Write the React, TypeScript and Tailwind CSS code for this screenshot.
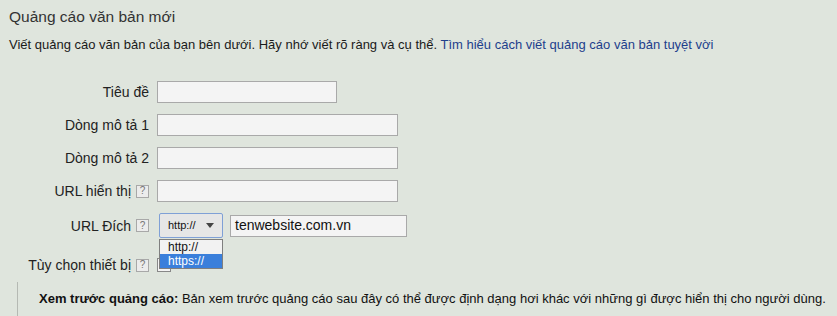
import React from "react";

function Help() {
  return (
    <span className="inline-flex h-[13px] w-[13px] items-center justify-center border border-[#a8a8a8] bg-[#ececec] text-[10px] leading-none text-[#777]">
      ?
    </span>
  );
}

function Label({ text, help, extra = "" }: { text: string; help?: boolean; extra?: string }) {
  return (
    <div className={`flex items-center justify-end gap-[5px] pr-[8px] text-[14px] leading-[16px] text-[#222] ${extra}`}>
      <span>{text}</span>
      {help && <Help />}
    </div>
  );
}

function Field({ w }: { w: string }) {
  return <div className={`h-[22px] ${w} border border-[#a9a9a9] bg-[#f4f4f4]`} />;
}

export default function App() {
  return (
    <div
      className="relative h-[316px] w-[837px] overflow-hidden bg-[#dfe5dd] text-[#222]"
      style={{ fontFamily: '"Liberation Sans", Arial, sans-serif' }}
    >
      <div className="px-[9px] pt-[7px]">
        <h1 className="text-[15.5px] leading-[20px] text-[#333]">Quảng cáo văn bản mới</h1>
        <p className="mt-[9px] text-[13px] leading-[18px] text-[#1a1a1a]">
          Viết quảng cáo văn bản của bạn bên dưới. Hãy nhớ viết rõ ràng và cụ thể.{" "}
          <a className="text-[#1d3f8c]">Tìm hiểu cách viết quảng cáo văn bản tuyệt vời</a>
        </p>
      </div>

      <div className="mt-[27px] grid grid-cols-[157px_1fr] gap-y-[11px]">
        <Label text="Tiêu đề" />
        <Field w="w-[180px]" />

        <Label text="Dòng mô tả 1" />
        <Field w="w-[241px]" />

        <Label text="Dòng mô tả 2" />
        <Field w="w-[241px]" />

        <Label text="URL hiển thị" help />
        <Field w="w-[241px]" />

        <Label text="URL Đích" help />
        <div className="relative flex items-center gap-[7px] pl-[2px]">
          <div className="flex h-[25px] w-[64px] items-center justify-between rounded-[2px] border border-[#7fa0d6] bg-[#e6e6e6] px-[8px] text-[11px] text-[#111]">
            <span>http://</span>
            <svg width="8" height="5" viewBox="0 0 8 5">
              <path d="M0 0h8L4 5z" fill="#444" />
            </svg>
          </div>
          <div className="flex h-[22px] w-[177px] items-center border border-[#a9a9a9] bg-[#f4f4f4] px-[4px] text-[14px] text-[#111]">
            tenwebsite.com.vn
          </div>
          <div className="absolute left-[2px] top-[26px] z-10 w-[64px] border border-[#7f7f7f] bg-[#f2f2f2] text-[12px] leading-[14px]">
            <div className="px-[8px] text-[#111]">http://</div>
            <div className="bg-[#3a7fdb] px-[8px] text-white">https://</div>
          </div>
        </div>

        <Label text="Tùy chọn thiết bị" help extra="mt-[8px]" />
        <div className="mt-[8px] flex items-center">
          <div className="h-[14px] w-[14px] border border-[#888] bg-[#f4f4f4]" />
        </div>
      </div>

      <div className="ml-[17px] mt-[9px] flex h-[40px] border-l border-[#b5b9b3] pl-[21px] pt-[8px] text-[13px] leading-[18px] text-[#111]">
        <p>
          <b>Xem trước quảng cáo:</b> Bản xem trước quảng cáo sau đây có thể được định dạng hơi khác với những gì được hiển thị cho người dùng.
        </p>
      </div>
    </div>
  );
}
